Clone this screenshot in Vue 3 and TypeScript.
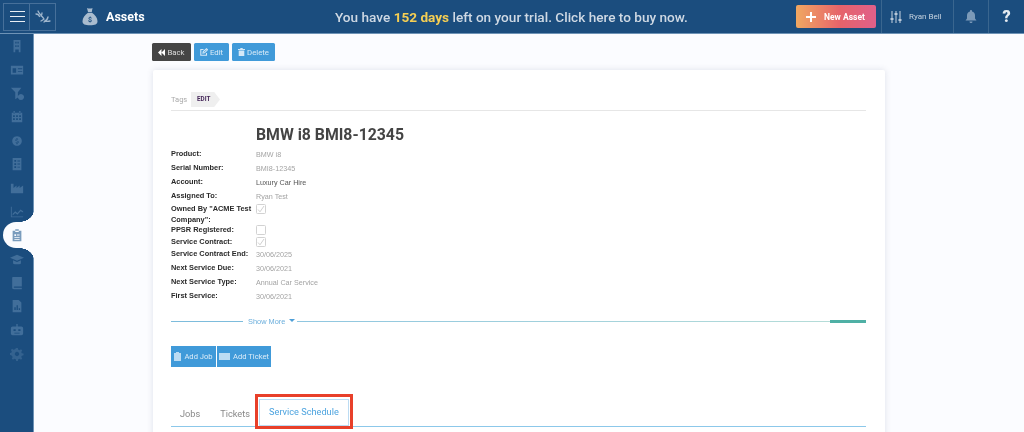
<script setup lang="ts">
const icons: string[] = [
  'M4 1h8v14h-2v-3H6v3H4zM6 3v2h1.500V3zM8.500 3v2H10V3zM6 7v2h1.500V7zM8.500 7v2H10V7z',
  'M1 3h14v10H1zM3 6v5h4V6zM9 6v1h5V6zM9 9v1h5V9z',
  'M1 2h12L9 7v6l-3 2V7zM12.500 9a3.500 3.500 0 1 0 .01 0z',
  'M2 3h12v11H2zM4 1h1.500v3H4zM10.500 1H12v3h-1.500zM3.500 6v2h2V6zM7 6v2h2V6zM10.500 6v2h2V6zM3.500 9.500v2h2v-2zM7 9.500v2h2v-2zM10.500 9.500v2h2v-2z',
  'M8 2.500a5.500 5.500 0 1 0 .01 0zM7.400 4.500v1.100C6 5.900 5.600 7 6.400 7.800c.6.600 2.800.6 2.800 1.500 0 .6-1.700.6-2.700 0v1.100c.3.100.6.200.9.200v1h1.200v-1c1.500-.4 1.700-1.700 1-2.400-.7-.6-2.700-.6-2.700-1.400 0-.5 1.500-.5 2.300-.1V5.600c-.3-.1-.6-.2-.8-.2V4.500z',
  'M3 1h10v14H3zM5 3.500v2h2v-2zM8.500 4v1h3V4zM5 7v2h2V7zM8.500 7.500v1h3v-1zM5 10.500v2h2v-2zM8.500 11v1h3v-1z',
  'M1 14V3h3v5l3.500-3v3L11 5v3l4-3v9z',
  'M1 2h1v11h13v1H1zM3 10l3-3 2.500 2L12 5l3 2v1.500l-3-1.500-3.500 4L6 9l-3 3z',
  'M3 3h10v12H3zM6 1.500h4V4.500H6zM5 7v2h2V7zM8 7.500v1h3v-1zM5 10.500v1h6v-1zM5 12.500v1h6v-1z',
  'M8 3l8 3.500L8 10 0 6.500zM3.500 9.500L8 11.500l4.500-2V13c-2 1.500-7 1.500-9 0z',
  'M3 1h10.500v11H5c-1 0-1 1.500 0 1.500h8.500V15H4.500C3 15 2.500 14 2.500 13V2.500C2.500 1.500 3 1 3 1z',
  'M3 1h7l3 3v11H3zM5 12.500h1.500V9.500H5zM7.500 12.500H9V7H7.500zM10 12.500h1.500V10.500H10z',
  'M3 4h10c1 0 2 1 2 2v6c0 1-1 2-2 2H3c-1 0-2-1-2-2V6c0-1 1-2 2-2zM7.250 1h1.500v3h-1.500zM4 7v2h2.500V7zM9.500 7v2H12V7zM5 11v1h6v-1z',
  'M7 1h2l.4 2 1.500.6 1.700-1.100 1.400 1.400-1.100 1.700.6 1.500 2 .4v2l-2 .4-.6 1.500 1.100 1.700-1.400 1.400-1.700-1.100-1.500.6-.4 2H7l-.4-2-1.500-.6-1.700 1.100-1.400-1.400 1.100-1.700L1.500 9.400-.5 9V7l2-.4.6-1.500L1 3.400 2.400 2l1.700 1.100 1.500-.6zM8 5.500a2.500 2.500 0 1 0 .01 0z'
]
const rows: { label: string; value?: string; cls?: string; check?: boolean; on?: boolean; h: number }[] = [
  { label: 'Product:', value: 'BMW i8', h: 14 },
  { label: 'Serial Number:', value: 'BMI8-12345', h: 14 },
  { label: 'Account:', value: 'Luxury Car Hire', cls: 'dark', h: 14 },
  { label: 'Assigned To:', value: 'Ryan Test', h: 13 },
  { label: 'Owned By "ACME Test Company":', check: true, on: true, h: 21 },
  { label: 'PPSR Registered:', check: true, on: false, h: 12 },
  { label: 'Service Contract:', check: true, on: true, h: 12 },
  { label: 'Service Contract End:', value: '30/06/2025', h: 14 },
  { label: 'Next Service Due:', value: '30/06/2021', h: 14 },
  { label: 'Next Service Type:', value: 'Annual Car Service', h: 14 },
  { label: 'First Service:', value: '30/06/2021', h: 14 }
]
</script>

<template>
  <div class="page">
    <header class="topbar">
      <div class="brand">
        <div class="burger"><i></i><i></i><i></i></div>
        <div class="leaf">
          <svg width="16" height="16" viewBox="0 0 16 16" fill="none" stroke="#9fb6cd" stroke-width="1.300" stroke-linecap="round">
            <path d="M3 2c1 3 4 5 6 8M13 8c-.5 2.500-2 4-4 5M1 5c2 0 3 1 3.500 2.500M7 4c0 1-.3 2-1 3M6 12c1-.5 2-1 3-2M15 12c-2 .5-4 .5-5-.5" />
          </svg>
        </div>
      </div>
      <div class="title">
        <svg width="16" height="19" viewBox="0 0 16 19">
          <path fill="#a9bccf" d="M5 1c1.500.8 4 .8 5.500 0L9.800 5H6zM6 5.800h4c3 2 5.500 5 5.500 8.500 0 3-2.500 4-7.500 4S.5 17.300.5 14.300C.5 10.800 3 7.800 6 5.800z" />
          <text x="8" y="15" text-anchor="middle" font-size="7" font-family="Roboto, sans-serif" fill="#1b4d7e">$</text>
        </svg>
        <span>Assets</span>
      </div>
      <div class="trial">You have <b>152 days</b> left on your trial. Click here to buy now.</div>
      <button class="new"><span class="plus"></span>New Asset</button>
      <div class="user cell">
        <svg width="12" height="14" viewBox="0 0 12 14" fill="none" stroke="#b9c8d8" stroke-width="1.100">
          <path d="M2 1v12M6 1v12M10 1v12" />
          <path stroke-width="2.200" d="M.5 9h3M4.500 4h3M8.500 10h3" />
        </svg>
        <span>Ryan Bell</span>
      </div>
      <div class="bell cell">
        <svg width="12" height="13" viewBox="0 0 12 13">
          <path fill="#7c9ab8" d="M6 0c.6 0 1 .4 1 1v.6c2 .5 3 2 3 4v3l1.500 2H.5L2 8.600v-3c0-2 1-3.500 3-4V1c0-.6.400-1 1-1zM4.500 11.500h3C7.500 12.500 6.800 13 6 13s-1.500-.5-1.500-1.500z" />
        </svg>
      </div>
      <div class="help">?</div>
    </header>

    <div class="body">
      <nav class="side">
        <div v-for="(d, i) in icons" :key="i" class="item" :class="{ active: i === 8, dim: i === 13 }">
          <svg width="14" height="14" viewBox="0 0 16 16"><path :d="d" fill-rule="evenodd" /></svg>
        </div>
      </nav>

      <main class="main">
        <div class="actions">
          <button class="btn back"><svg width="7" height="7" viewBox="0 0 8 8"><path fill="#fff" d="M4 0v8L0 4zM8 0v8L4 4z" /></svg>Back</button>
          <button class="btn edit"><svg width="8" height="8" viewBox="0 0 8 8" fill="none" stroke="#d4e8f7" stroke-width="1.100"><path d="M6.500 5v2.200H.8V1.500H3.500M3 5l.3-1.500L6.500.8 7.500 1.800 4.500 4.800z" /></svg>Edit</button>
          <button class="btn del"><svg width="7" height="8" viewBox="0 0 7 8"><path fill="#d4e8f7" d="M0 1h2.300V0h2.400v1H7v1H0zM.7 2.600h5.600V8H.7z" /></svg>Delete</button>
        </div>

        <section class="card">
          <div class="tags">
            <span class="tags-label">Tags</span>
            <span class="tag">EDIT</span>
          </div>
          <h1>BMW i8 BMI8-12345</h1>
          <div class="details">
            <div v-for="r in rows" :key="r.label" class="row" :style="{ height: r.h + 'px' }">
              <div class="label">{{ r.label }}</div>
              <div v-if="r.check" class="check">
                <svg v-if="r.on" width="8" height="8" viewBox="0 0 8 8" fill="none" stroke="#c4c4c4" stroke-width="0.800"><path d="M1 4.500L3 6.800 7 1" /></svg>
              </div>
              <div v-else class="value" :class="r.cls">{{ r.value }}</div>
            </div>
          </div>
          <div class="more">
            <span class="line short"></span>
            <span class="more-text">Show More</span>
            <span class="caret"></span>
            <span class="line long"></span>
            <span class="line teal"></span>
          </div>
          <div class="adds">
            <button class="btn add"><svg width="7" height="9" viewBox="0 0 7 9"><path fill="#bcdcf3" d="M0 1h2V0h3v1h2v8H0z" /></svg>Add Job</button>
            <button class="btn add"><svg width="11" height="7" viewBox="0 0 11 7"><path fill="#bcdcf3" d="M0 0h11v7H0z" /></svg>Add Ticket</button>
          </div>
          <div class="tabs">
            <span class="tab">Jobs</span>
            <span class="tab">Tickets</span>
            <span class="tab current">Service Schedule<span class="mark"></span></span>
          </div>
        </section>
      </main>
    </div>
  </div>
</template>

<style>
html, body { margin: 0; background: #fbfcff; }
</style>

<style scoped>
.page {
  width: 1024px;
  height: 432px;
  overflow: hidden;
  display: flex;
  flex-direction: column;
  font-family: Roboto, "Liberation Sans", sans-serif;
  background: #fbfcff;
  filter: blur(0.3px);
}
button { font-family: inherit; border: 0; cursor: pointer; }

.topbar {
  height: 34px;
  flex: none;
  box-sizing: border-box;
  display: flex;
  align-items: center;
  background: #1b4d7e;
  border-bottom: 1px solid #6e93b6;
  color: #fff;
}
.brand {
  width: 53px;
  height: 28px;
  margin-left: 3px;
  box-sizing: border-box;
  border: 1px solid #47709a;
  display: flex;
  align-items: center;
  flex: none;
}
.burger {
  width: 26px;
  height: 100%;
  box-sizing: border-box;
  display: flex;
  flex-direction: column;
  justify-content: center;
  gap: 3.500px;
  padding-left: 6px;
  border-right: 1px solid #47709a;
}
.burger i { display: block; width: 15px; height: 1.500px; background: #e9eef4; }
.leaf { flex: 1; display: flex; justify-content: center; }
.title {
  margin-left: 26px;
  width: 98px;
  flex: none;
  display: flex;
  align-items: center;
  gap: 8px;
  font-size: 12.500px;
  font-weight: 700;
}
.trial {
  width: 355px;
  margin-left: 155px;
  flex: none;
  white-space: nowrap;
  font-size: 13.600px;
  font-weight: 500;
  color: #cfd9e4;
}
.trial b { color: #f6cf53; font-weight: 700; }
.new {
  margin-left: 106px;
  width: 80px;
  height: 23px;
  flex: none;
  display: flex;
  align-items: center;
  gap: 8px;
  padding: 0 0 0 10px;
  box-sizing: border-box;
  border-radius: 2px;
  color: #fff;
  font-size: 8.500px;
  font-weight: 700;
  background: linear-gradient(90deg, #f0a862 0%, #e6636a 55%, #e0608a 100%);
}
.plus {
  width: 10px;
  height: 10px;
  background:
    linear-gradient(#fff, #fff) center / 10px 2px no-repeat,
    linear-gradient(#fff, #fff) center / 2px 10px no-repeat;
}
.cell { height: 33px; display: flex; align-items: center; box-sizing: border-box; border-left: 1px solid #3a668f; flex: none; }
.user {
  margin-left: 5px;
  width: 72px;
  padding-left: 8px;
  gap: 7px;
  font-size: 8px;
  color: #c5d2df;
}
.bell { width: 35px; justify-content: center; }
.help {
  flex: 1;
  height: 33px;
  border-left: 1px solid #3a668f;
  display: flex;
  align-items: center;
  justify-content: center;
  font-size: 16px;
  font-weight: 900;
  color: #e6ecf2;
}

.body { flex: 1; display: flex; min-height: 0; }
.side {
  width: 34px;
  box-sizing: border-box;
  flex: none;
  background: #1b4d7e;
  border-right: 1px solid #6e93b6;
  display: flex;
  flex-direction: column;
  padding-top: 0;
}
.item {
  position: relative;
  height: 23.700px;
  flex: none;
  display: flex;
  align-items: center;
  justify-content: center;
  fill: #416e9a;
}
.item svg { position: relative; z-index: 1; }
.item.dim { fill: #34628f; }
.item.active { fill: #7a9cbd; }
.item.active::before {
  content: "";
  position: absolute;
  left: 3px;
  right: -1px;
  top: -2px;
  height: 26px;
  background: #fbfcff;
  border-radius: 13px 0 0 13px;
}
.item.active::after {
  content: "";
  position: absolute;
  right: -1px;
  top: -14px;
  width: 15px;
  height: 50px;
  background:
    radial-gradient(15px 12px at 0 0, transparent 98%, #fbfcff 100%) right top / 15px 12px no-repeat,
    radial-gradient(15px 12px at 0 100%, transparent 98%, #fbfcff 100%) right bottom / 15px 12px no-repeat;
}

.main { flex: 1; padding: 9px 0 0 118px; min-width: 0; }
.actions { display: flex; gap: 3px; height: 18px; }
.btn {
  height: 18px;
  padding: 0;
  display: inline-flex;
  align-items: center;
  justify-content: center;
  gap: 2px;
  white-space: nowrap;
  background: #409ad9;
  color: #d9ebf8;
  font-size: 7.800px;
  border-radius: 1.500px;
  border: 0;
}
.btn.back { width: 39px; background: #454545; color: #ddd; }
.btn.edit { width: 35px; }
.btn.del { width: 43px; }

.card {
  width: 732px;
  height: 400px;
  margin: 9px 0 0 1px;
  padding: 22px 19px 0 18px;
  box-sizing: border-box;
  background: #fff;
  box-shadow: 0 0 6px rgba(60, 70, 110, 0.150);
  border-radius: 2px;
}
.tags {
  height: 18px;
  display: flex;
  align-items: flex-start;
  border-bottom: 1px solid #e6e6e6;
}
.tags-label { width: 20px; font-size: 7.500px; color: #aaa; line-height: 15px; }
.tag {
  width: 29px;
  height: 15px;
  padding-left: 6px;
  box-sizing: border-box;
  background: #efefef;
  clip-path: polygon(0 0, 80% 0, 100% 50%, 80% 100%, 0 100%);
  font-size: 6.300px;
  font-weight: 700;
  line-height: 15px;
  color: #46285a;
}
h1 {
  margin: 13px 0 0 85px;
  font-size: 15.800px;
  line-height: 22px;
  font-weight: 700;
  color: #444;
}
.details { margin-top: 2px; }
.row { display: flex; }
.label {
  width: 85px;
  flex: none;
  font-family: "Liberation Sans", sans-serif;
  font-size: 7.400px;
  font-weight: 700;
  line-height: 11px;
  color: #2a2a2a;
}
.value {
  font-family: "Liberation Sans", sans-serif;
  font-size: 7.200px;
  line-height: 11px;
  padding-top: 1px;
  color: #a3a3a3;
}
.value.dark { color: #555; }
.check {
  width: 10px;
  height: 10px;
  margin-top: 1px;
  box-sizing: border-box;
  border: 1px solid #d2d2d2;
  border-radius: 1.500px;
  background: #fff;
  display: flex;
  align-items: center;
  justify-content: center;
}
.more { display: flex; align-items: center; height: 12px; margin-top: 11px; }
.line { height: 1px; background: #7dbcdc; }
.line.short { width: 72px; }
.more-text { margin-left: 5px; font-size: 7.400px; color: #6aaedc; font-family: "Liberation Sans", sans-serif; }
.caret {
  margin: 0 2px 2px 4px;
  border: 3px solid transparent;
  border-top: 3px solid #4e9fd8;
  border-bottom: 0;
}
.line.long { flex: 1; background: linear-gradient(90deg, #8fc6e0, #b5dcd8); }
.line.teal { width: 36px; height: 3px; background: #4fb0a5; }
.adds { display: flex; gap: 1px; margin-top: 19px; }
.btn.add { height: 21px; border-radius: 0; color: #dcecf8; font-size: 7.600px; gap: 3px; }
.btn.add:first-child { width: 45px; }
.btn.add:last-child { width: 54px; }
.tabs {
  display: flex;
  align-items: flex-end;
  height: 27px;
  margin-top: 32px;
  border-bottom: 1.500px solid #8cc8ea;
  font-size: 9.200px;
  color: #888;
}
.tab { line-height: 25px; padding: 0 10px 0 9px; }
.tab:nth-child(2) { padding: 0 9px 0 10px; }
.tab.current {
  position: relative;
  width: 90px;
  height: 27px;
  padding: 0;
  box-sizing: border-box;
  text-align: center;
  border: 1px solid #bcdcf3;
  line-height: 24px;
  color: #4ca3df;
}
.mark {
  position: absolute;
  left: -5px;
  right: -5px;
  top: -6px;
  bottom: -4px;
  border: 3px solid #e8402a;
  pointer-events: none;
}
</style>
